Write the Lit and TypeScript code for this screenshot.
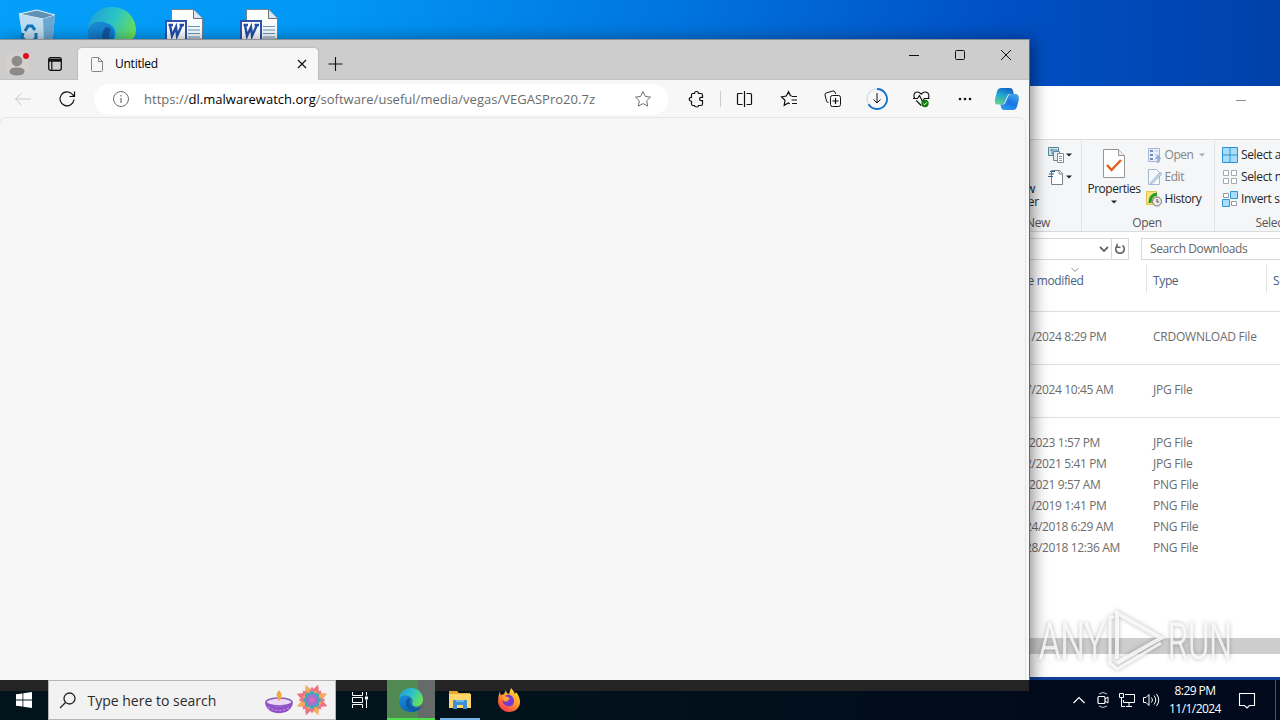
import { LitElement, html, css, svg } from 'lit';
import { customElement } from 'lit/decorators.js';

const files = [
  { group: true, date: '11/1/2024 8:29 PM', type: 'CRDOWNLOAD File' },
  { group: true, date: '10/7/2024 10:45 AM', type: 'JPG File' },
  { group: true, date: '8/9/2023 1:57 PM', type: 'JPG File' },
  { date: '9/22/2021 5:41 PM', type: 'JPG File' },
  { date: '6/7/2021 9:57 AM', type: 'PNG File' },
  { date: '3/11/2019 1:41 PM', type: 'PNG File' },
  { date: '10/24/2018 6:29 AM', type: 'PNG File' },
  { date: '12/28/2018 12:36 AM', type: 'PNG File' },
];

const edgeLogo = (id: string) => svg`
  <defs>
    <linearGradient id="${id}a" x1="0" y1="0.2" x2="1" y2="0.6">
      <stop offset="0" stop-color="#229fd8" />
      <stop offset="0.5" stop-color="#2bc3c8" />
      <stop offset="1" stop-color="#6be256" />
    </linearGradient>
    <linearGradient id="${id}b" x1="0" y1="0" x2="0.5" y2="1">
      <stop offset="0" stop-color="#1a8fdc" />
      <stop offset="1" stop-color="#0c62b8" />
    </linearGradient>
  </defs>
  <path fill="url(#${id}a)" d="M0 22C1 8 12 0 24 0c15 0 24 11 24 23 0 9-7 14-15 14-5 0-8-2-7-5 3-4 2-12-5-15C13 13 4 16 0 22z" />
  <path fill="url(#${id}b)" d="M0 23C2 16 10 13 18 16c6 2 9 7 8 12-1 6 4 11 13 11 3 0 5-1 7-2-5 8-14 12-23 11C9 47-1 37 0 23z" />
  <path fill="#1257a0" d="M18 20c-6 6-5 17 3 23 6 5 18 3 24-5-12 5-23 1-24-9-.1-3 1-5 2-6-1-2-3-3-5-3z" />
`;

const wordIcon = html`
  <svg width="40" height="30" viewBox="0 0 40 30">
    <path d="M6.500 30V.5h22l9 9V30z" fill="#fdfefe" stroke="#69717a" stroke-width=".8" />
    <path d="M28.500.5v9h9" fill="#dfe5ec" stroke="#69717a" />
    <path d="M23 17.500h12M23 21h12M23 24.500h12M23 28h12" stroke="#6299c9" />
    <rect x="1" y="12" width="20" height="20" fill="#fff" stroke="#2a55ab" stroke-width="2" />
    <path d="M5 16l2 11 4-9 1 9 5-11M3.500 16H8M14.500 16H19" fill="none" stroke="#2450a8" stroke-width="2.400" />
  </svg>
`;

/**
 * Icons on the desktop background
 */
@customElement('desktop-icons')
export class DesktopIcons extends LitElement {
  static styles = css`
    :host {
      display: flex;
      padding: 7px 0 0 17px;
      height: 34px;
      overflow: hidden;
    }
    .item {
      width: 71px;
      height: 34px;
    }
    .item + .item {
      width: 77px;
    }
    .item + .item + .item {
      width: 75px;
      padding-top: 2px;
    }
  `;

  render() {
    return html`
      <div class="item">
        <svg width="40" height="40" viewBox="0 0 40 40">
          <path d="M2 7l18-4 18 5-3 32H7z" fill="#9fd0ef" />
          <path d="M2 7l18-4 18 5-12 4z" fill="#5e91b5" stroke="#e5f4fc" />
          <path d="M26 12l12-4-3 32h-8z" fill="#6ba9d3" />
          <path d="M2 7l24 5 1 28H7z" fill="#bfdef1" />
          <path d="M8 24l3-5 4 0 3 4M19 26l0 5-3 3h-3M6 26l-1 4 4 5" fill="none" stroke="#1277bd" stroke-width="3" />
        </svg>
      </div>
      <div class="item">
        <svg width="48" height="48" viewBox="0 0 48 48">${edgeLogo('d')}</svg>
      </div>
      <div class="item">${wordIcon}</div>
      <div class="item">${wordIcon}</div>
    `;
  }
}

/**
 * Edge window with a single tab
 */
@customElement('browser-window')
export class BrowserWindow extends LitElement {
  static styles = css`
    :host {
      display: flex;
      flex-direction: column;
      background: #f7f7f7;
      color: #000;
      font-family: 'Open Sans', 'Noto Sans', sans-serif;
      box-sizing: border-box;
      border-right: 1px solid #66696c;
      border-top: 1px solid #8a9297;
      box-shadow: 2px 2px 16px rgba(0, 0, 0, 0.5);
    }
    svg {
      display: block;
      flex: none;
      fill: none;
      stroke: #111;
      overflow: visible;
    }
    .titlebar {
      display: flex;
      height: 40px;
      background: #cdcdcd;
      border-bottom: 1px solid #c2c2c2;
      box-sizing: border-box;
    }
    .profile {
      padding: 11px 0 0 5px;
      width: 42px;
      box-sizing: border-box;
    }
    .workspaces {
      padding-top: 17px;
      width: 30px;
      padding-left: 6px;
      box-sizing: border-box;
    }
    .tab {
      margin: 8px 0 -1px 6px;
      width: 240px;
      box-sizing: border-box;
      padding: 0 11px 0 13px;
      display: flex;
      align-items: center;
      background: #f7f7f7;
      border-radius: 4px 4px 0 0;
      box-shadow: 0 0 2px #999;
      clip-path: inset(-2px -2px 0 -2px);
    }
    .tab span {
      flex: 1;
      padding: 0 0 1px 12px;
      font-size: 12px;
      letter-spacing: -0.250px;
    }
    .new-tab {
      padding: 17px 0 0 10px;
      flex: 1;
    }
    .controls {
      display: flex;
      gap: 36px;
      padding: 10px 18px 0 0;
    }
    .toolbar {
      display: flex;
      align-items: center;
      height: 37px;
      padding-top: 1px;
      box-sizing: border-box;
      background: #f7f7f7;
    }
    .back {
      margin-left: 14px;
    }
    .reload {
      margin: 0 18px 0 27px;
    }
    .omnibox {
      display: flex;
      align-items: center;
      width: 574px;
      height: 31px;
      padding: 0 16px 0 18px;
      box-sizing: border-box;
      border-radius: 16px;
      background: #fff;
    }
    .url {
      flex: 1;
      padding-left: 14px;
      font-size: 13px;
      letter-spacing: 0.020px;
      color: #6b6b6b;
      white-space: nowrap;
    }
    .url b {
      font-weight: 400;
      color: #000;
    }
    .actions {
      flex: 1;
      display: flex;
      align-items: center;
      padding-left: 20px;
    }
    .divider {
      width: 1px;
      height: 16px;
      margin: 0 15px 0 14px;
      background: #ccc;
    }
    .spaced {
      display: flex;
      align-items: center;
      gap: 24px;
    }
    .copilot {
      margin-left: 18px;
    }
    .page {
      flex: 1;
      margin: 0 3px 0 -1px;
      border: 1px solid #e6e6e6;
      border-width: 1px 1px 0;
      border-radius: 7px 7px 0 0;
      background: #f6f6f6;
    }
  `;

  render() {
    return html`
      <div class="titlebar">
        <div class="profile">
          <svg width="26" height="26" viewBox="0 0 26 26">
            <circle cx="12" cy="13" r="12.500" fill="#d3d0cd" stroke="none" />
            <circle cx="12" cy="10" r="5.300" fill="#8d8b89" stroke="none" />
            <path d="M4.500 20.500c0-3 3-4 7.500-4s7.500 1 7.500 4-4 4-7.500 4-7.500-1-7.500-4z" fill="#8d8b89" stroke="none" />
            <circle cx="21" cy="5" r="3" fill="#e30b1c" stroke="none" />
          </svg>
        </div>
        <div class="workspaces">
          <svg width="14" height="14" viewBox="0 0 14 14">
            <rect x=".7" y=".7" width="12.600" height="12.600" rx="2" stroke-width="1.300" />
            <path d="M1 2.500h12M1 4h12" stroke-width="1.300" />
            <path d="M3.800 4v9" stroke-width="1.200" />
          </svg>
        </div>
        <div class="tab">
          <svg width="12" height="15" viewBox="0 0 12 15">
            <path d="M.5 1.500q0-1 1-1h6l4 4v9q0 1-1 1h-9q-1 0-1-1zM7.500.5v4h4" stroke="#858585" />
          </svg>
          <span>Untitled</span>
          <svg width="10" height="10" viewBox="0 0 10 10">
            <path d="M1 1l8 8M9 1l-8 8" stroke-width="1.200" />
          </svg>
        </div>
        <div class="new-tab">
          <svg width="14" height="14" viewBox="0 0 14 14">
            <path d="M7.500 0v14M.5 7h14" stroke-width="1.100" />
          </svg>
        </div>
        <div class="controls">
          <svg width="10" height="10" viewBox="0 0 10 10"><path d="M0 5.500h10" /></svg>
          <svg width="10" height="10" viewBox="0 0 10 10">
            <rect x=".5" y=".5" width="9" height="9" rx="1" />
          </svg>
          <svg width="10" height="10" viewBox="0 0 10 10"><path d="M0 0l10 10M10 0L0 10" /></svg>
        </div>
      </div>
      <div class="toolbar">
        <svg class="back" width="18" height="14" viewBox="0 0 18 14">
          <path d="M17 7H1.500M7.500 1l-6 6 6 6" stroke="#c9c9c9" />
        </svg>
        <svg class="reload" width="17" height="16" viewBox="0 0 17 16">
          <path d="M15 8.500A7 7 0 1 1 13.500 3.500L15.500 5.500M15.500.5v5h-5" stroke-width="1.200" />
        </svg>
        <div class="omnibox">
          <svg width="18" height="18" viewBox="0 0 18 18">
            <circle cx="9" cy="9" r="7.500" stroke="#6d6d6d" />
            <path d="M9 8v5M9 5v1.500" stroke="#6d6d6d" stroke-width="1.200" />
          </svg>
          <div class="url">https://<b>dl.malwarewatch.org</b>/software/useful/media/vegas/VEGASPro20.7z</div>
          <svg width="18" height="18" viewBox="0 0 18 18">
            <path d="M9 1.500l2.300 4.900 5.200.7-3.800 3.700 1 5.300L9 13.600l-4.700 2.500 1-5.300L1.500 7.100l5.200-.7z" stroke="#707070" />
          </svg>
        </div>
        <div class="actions">
          <svg width="18" height="18" viewBox="0 0 18 18">
            <path d="M4.500 3.500h2C6.500.8 10.500.8 10.500 3.500h2.500q1.500 0 1.500 1.500v2.300h-1.200c-2.300 0-2.300 3.400 0 3.400h1.200V14q0 1.500-1.500 1.500h-2.500c0 2-4 2-4 0H5q-1.500 0-1.500-1.500v-2.700c-3 0-3-4 0-4V4.500q0-1 1-1z" stroke-width="1.200" />
          </svg>
          <div class="divider"></div>
          <div class="spaced">
            <svg width="18" height="18" viewBox="0 0 18 18">
              <path d="M6.500 3.500H2.500q-1 0-1 1v9q0 1 1 1h4M10.500 3.500h4q1 0 1 1v9q0 1-1 1h-4M8.500 1v16" stroke-width="1.200" />
            </svg>
            <svg width="20" height="18" viewBox="0 0 20 18">
              <path d="M14 6l-1.500-.2L10.500 1.700 8.300 6 3.500 6.800l3.500 3.500-.8 5L10.300 13l1.500.8M14 6.500h5M13.500 10h5.500M14 13.500h5" stroke-width="1.200" />
            </svg>
            <svg width="20" height="18" viewBox="0 0 20 18">
              <path d="M6.500 12.500q-1.500 0-2-1.500L3 5q-.3-1.500 1-2L11 1q1.500-.3 2 1l.6 2" />
              <rect x="8.500" y="5.500" width="10" height="11" rx="2" />
              <path d="M13.500 8v6M10.500 11h6" stroke-width="1.200" />
            </svg>
            <svg width="22" height="22" viewBox="0 0 22 22">
              <circle cx="11" cy="11" r="10" stroke="#dce5ee" stroke-width="1.600" />
              <path d="M11 1a10 10 0 1 1-8.500 15.300" stroke="#1673c9" stroke-width="1.800" />
              <path d="M11 5v10M7.500 11.500L11 15l3.500-3.500" />
            </svg>
            <svg width="20" height="18" viewBox="0 0 20 18">
              <path d="M3 8.500C1 6 1.800 2 5.200 2 7.200 2 8.200 3 9.200 4.200 10.200 3 11.200 2 13.200 2c3.700 0 4.700 4 2.700 6.800M4.200 10.500l5 5M1 8.500H5.500l2-3 3 6L12.200 8.500H17.500" stroke-width="1.100" />
              <circle cx="13" cy="13.500" r="3.700" fill="#107c10" stroke="none" />
              <path d="M11.300 13.500l1.300 1.300 2.300-2.500" stroke="#fff" />
            </svg>
            <svg width="20" height="18" viewBox="0 0 20 18">
              <g fill="#111" stroke="none">
                <circle cx="4" cy="9" r="1.300" />
                <circle cx="9" cy="9" r="1.300" />
                <circle cx="14" cy="9" r="1.300" />
              </g>
            </svg>
          </div>
          <svg class="copilot" width="26" height="24" viewBox="0 0 26 24">
            <defs>
              <linearGradient id="ca" x1="0.6" y1="0" x2="0.2" y2="1">
                <stop offset="0" stop-color="#1267c7" />
                <stop offset=".45" stop-color="#23a6d0" />
                <stop offset="1" stop-color="#69d389" />
              </linearGradient>
              <linearGradient id="cb" x1="0.7" y1="0" x2="0.2" y2="1">
                <stop offset="0" stop-color="#42a4e8" />
                <stop offset=".5" stop-color="#1b74e2" />
                <stop offset="1" stop-color="#2b9cf2" />
              </linearGradient>
            </defs>
            <path d="M7 1h9q2.500 0 3 3l.8 3h-4q-2 0-2.800 2.500L11 15q-.8 2.500-3 2.500H3.500C.5 17.500.5 14 1.500 10L3 4.500Q4 1 7 1z" fill="url(#ca)" stroke="none" />
            <path d="M19 23h-9q-2.500 0-3-3l-.6-2.500H9q2 0 2.800-2.500L14 9.500Q14.800 7 17 7h4.500c3 0 4 3.500 3 7L23 19.500q-1 3.500-4 3.500z" fill="url(#cb)" stroke="none" />
          </svg>
        </div>
      </div>
      <div class="page"></div>
    `;
  }
}

/**
 * File explorer showing the Downloads folder
 */
@customElement('explorer-window')
export class ExplorerWindow extends LitElement {
  static styles = css`
    :host {
      display: flex;
      flex-direction: column;
      box-sizing: border-box;
      background: #fff;
      color: #262626;
      font: 12px/16px 'Open Sans', 'Noto Sans', sans-serif;
      letter-spacing: -0.250px;
      white-space: nowrap;
      overflow: hidden;
    }
    svg {
      display: block;
      flex: none;
      fill: none;
    }
    .title {
      height: 53px;
      padding: 14px 0 0 236px;
      box-sizing: border-box;
    }
    .ribbon {
      display: flex;
      height: 93px;
      box-sizing: border-box;
      background: #f5f6f7;
      border: 1px solid #dadbdc;
      border-width: 1px 0;
    }
    .group {
      display: flex;
      flex: none;
      flex-direction: column;
      box-sizing: border-box;
      margin: 1px 0 0;
      border-right: 1px solid #e0e2e4;
    }
    .tools {
      display: flex;
      height: 70px;
    }
    .caption {
      text-align: center;
      color: #555;
      padding: 4px 2px 0 0;
      letter-spacing: -0.350px;
    }
    .new {
      width: 82px;
    }
    .new .caption {
      text-align: left;
      text-indent: 26px;
    }
    .new-folder {
      width: 42px;
      padding: 41px 2px 0 6px;
      box-sizing: border-box;
      text-align: center;
      line-height: 13px;
      background: linear-gradient(#f3cf61, #f3cf61) 29px 20px / 1px 12px no-repeat;
    }
    .stack {
      display: flex;
      flex-direction: column;
      padding-top: 3px;
    }
    .tool {
      display: flex;
      align-items: center;
      height: 22px;
      gap: 2px;
    }
    .new .stack {
      padding-left: 6px;
    }
    .open {
      width: 133px;
    }
    .open .tool {
      gap: 2.500px;
      letter-spacing: -0.450px;
    }
    .properties {
      width: 64px;
      display: flex;
      flex-direction: column;
      align-items: center;
      padding-top: 8px;
      box-sizing: border-box;
    }
    .properties span {
      padding: 3px 0 3px;
      letter-spacing: -0.500px;
    }
    .disabled {
      color: #858585;
    }
    .select {
      width: 120px;
      padding-left: 7px;
    }
    .select .caption {
      padding-right: 14px;
    }
    .select .tool {
      gap: 3px;
      letter-spacing: -0.350px;
    }
    .address {
      display: flex;
      padding-top: 6px;
      color: #666;
    }
    .path {
      display: flex;
      flex: none;
      align-items: center;
      justify-content: flex-end;
      width: 129px;
      height: 22px;
      box-sizing: border-box;
      border: 1px solid #d9d9d9;
      gap: 2px;
    }
    .refresh {
      border-left: 1px solid #d9d9d9;
      padding: 4px 2px;
    }
    .search {
      box-sizing: border-box;
      flex: 1;
      height: 22px;
      margin-left: 12px;
      padding: 2px 8px;
      border: 1px solid #d9d9d9;
      letter-spacing: -0.400px;
    }
    .row {
      display: grid;
      grid-template-columns: 139px 120px 80px;
      padding-left: 8px;
      height: 21px;
      align-items: center;
      color: #6d6d6d;
      letter-spacing: -0.370px;
    }
    .heading {
      height: 28px;
      margin-top: 5px;
      color: #4a6080;
    }
    .heading span {
      border-right: 1px solid #e3e3e3;
      height: 28px;
      box-sizing: border-box;
      padding-top: 2px;
      line-height: 28px;
    }
    .heading span:first-child {
      padding-left: 1px;
    }
    .heading span + span {
      padding-left: 6px;
    }
    .sort {
      height: 4px;
      margin: -25px 0 22px 71px;
    }
    .list {
      flex: 1;
    }
    .row .type {
      padding-left: 6px;
      letter-spacing: -0.230px;
    }
    .group-line {
      height: 14px;
      margin-top: 17px;
      border-top: 1px solid #dedede;
    }
    .scrollbar {
      height: 16px;
      margin-bottom: 23px;
      background: #cdcdcd;
    }
  `;

  _arrow(color = '#222') {
    return html`<svg width="6" height="4" viewBox="0 0 6 4"><path d="M0 .5h6l-3 3z" fill=${color} /></svg>`;
  }

  render() {
    return html`
      <div class="title">
        <svg width="10" height="2"><path d="M0 .5h10" stroke="#8e8e8e" /></svg>
      </div>
      <div class="ribbon">
        <div class="group new">
          <div class="tools">
            <div class="new-folder">New<br />folder</div>
            <div class="stack">
              <div class="tool">
                <svg width="16" height="16" viewBox="0 0 16 16">
                  <path d="M.5.500h10v8H.5z" fill="#d5e4ec" stroke="#52859b" />
                  <path d="M2 3h7v4H4V2" stroke="#52859b" />
                  <path d="M5.500 4.500h6v9h-6z" fill="#e7eef3" stroke="#67869c" />
                  <path d="M9.500 6.500h6v9h-6z" fill="#fff" stroke="#888" />
                  <path d="M11 9.500h3M11 11.500h3M11 13.500h3" stroke="#8b9fab" />
                </svg>
                ${this._arrow()}
              </div>
              <div class="tool">
                <svg width="16" height="16" viewBox="0 0 16 16">
                  <path d="M3.500 1.500h8l3 3v11h-11z" fill="#fff" stroke="#7b8389" />
                  <path d="M11 1v4h4" stroke="#7b8389" />
                  <path d="M2 2.500h5M1 5h5M0 7.500h5" stroke="#28639c" />
                </svg>
                ${this._arrow()}
              </div>
            </div>
          </div>
          <div class="caption">New</div>
        </div>
        <div class="group open">
          <div class="tools">
            <div class="properties">
              <svg width="22" height="29" viewBox="0 0 22 29">
                <path d="M.5.500h15l6 6v22H.5z" fill="#fff" stroke="#969696" />
                <path d="M15.500.5v6h6" fill="#eee" stroke="#969696" />
                <path d="M4 16l4.500 5L18 11" stroke="#e2601e" stroke-width="2.500" />
              </svg>
              <span>Properties</span>
              ${this._arrow()}
            </div>
            <div class="stack">
              <div class="tool disabled">
                <svg width="16" height="16" viewBox="0 0 16 16">
                  <path d="M2.500 1.500h11v13h-11z" fill="#eaf0fb" stroke="#a8b5ce" />
                  <path d="M4 4h3M4 8h3M4 12h3" stroke="#6c88bf" stroke-width="2" />
                  <path d="M9 4h3M9 8h3" stroke="#b5c1d6" />
                  <path d="M12 16V9M9.500 12L12 9l2.500 3" stroke="#8faad5" stroke-width="1.500" />
                </svg>
                <span>Open&nbsp;</span>${this._arrow('#aaa')}
              </div>
              <div class="tool disabled">
                <svg width="16" height="16" viewBox="0 0 16 16">
                  <path d="M2.500.5h8l3 3v12h-11z" fill="#f6f9fc" stroke="#aab9ca" />
                  <path d="M5 13L14 3l2 2-9 9-3 1z" fill="#bdd3ea" stroke="#9eb8d4" stroke-width=".7" />
                </svg>
                Edit
              </div>
              <div class="tool">
                <svg width="16" height="16" viewBox="0 0 16 16">
                  <path d="M.5.500h10v13H.5z" fill="#fae37c" stroke="#e2c352" />
                  <circle cx="11" cy="10.500" r="4.500" fill="#e8e8e8" stroke="#777" />
                  <path d="M11 8v3h2" stroke="#555" />
                  <path d="M11 3Q4 4 4 12" stroke="#239b2d" stroke-width="3" />
                </svg>
                History
              </div>
            </div>
          </div>
          <div class="caption">Open</div>
        </div>
        <div class="group select">
          <div class="tools">
            <div class="stack">
              <div class="tool">
                <svg width="16" height="16" viewBox="0 0 16 16">
                  <path d="M.5.500h15v15H.5zM8 0v16M0 8h16" fill="#a9defb" stroke="#2991d3" />
                </svg>
                Select all
              </div>
              <div class="tool">
                <svg width="16" height="16" viewBox="0 0 16 16">
                  <path d="M1.500 1.500h5v5h-5zM9.500 1.500h5v5h-5zM1.500 9.500h5v5h-5zM9.500 9.500h5v5h-5z" fill="#fff" stroke="#a3abb0" />
                </svg>
                Select none
              </div>
              <div class="tool">
                <svg width="16" height="16" viewBox="0 0 16 16">
                  <path d="M1.500 2.500h5v4h-5zM9.500 10.500h5v4h-5z" fill="#fff" stroke="#929ca3" />
                  <path d="M8.500.500h7v7h-7zM.5 8.500h7v7h-7z" fill="#a9defb" stroke="#3595d4" />
                </svg>
                Invert selection
              </div>
            </div>
          </div>
          <div class="caption">Select</div>
        </div>
      </div>
      <div class="address">
        <div class="path">
          <svg width="10" height="6" viewBox="0 0 10 6"><path d="M1 1l4 4 4-4" stroke="#666" stroke-width="1.800" /></svg>
          <div class="refresh">
            <svg width="12" height="12" viewBox="0 0 12 12">
              <path d="M8.500 2.500a4.300 4.300 0 1 1-5 0M3 .8v3.400h3.500" stroke="#666" stroke-width="1.600" />
            </svg>
          </div>
        </div>
        <div class="search">Search Downloads</div>
      </div>
      <div class="row heading">
        <span>Date modified</span><span>Type</span><span>Size</span>
      </div>
      <svg class="sort" width="8" height="4" viewBox="0 0 8 4"><path d="M.5 0L4 3.500 7.500 0" stroke="#8e8e8e" /></svg>
      <div class="list">
        ${files.map(
          f => html`
            ${f.group ? html`<div class="group-line"></div>` : ''}
            <div class="row">
              <span>${f.date}</span><span class="type">${f.type}</span>
            </div>
          `
        )}
      </div>
      <div class="scrollbar"></div>
    `;
  }
}

@customElement('task-bar')
export class TaskBar extends LitElement {
  static styles = css`
    :host {
      display: flex;
      background: linear-gradient(90deg, #02131b 0, #02131b 500px, #010b1c 1030px, #010a1c 100%);
      color: #fff;
      font-family: 'Open Sans', 'Noto Sans', sans-serif;
    }
    svg {
      display: block;
      flex: none;
      fill: none;
    }
    .under {
      position: absolute;
      left: 0;
      top: 0;
      width: 1029px;
      height: 11px;
      background: #242424;
    }
    .items {
      position: relative;
      display: flex;
      flex: 1;
    }
    .button {
      display: flex;
      align-items: center;
      justify-content: center;
      width: 48px;
      box-sizing: border-box;
    }
    .search {
      display: flex;
      align-items: center;
      width: 288px;
      box-sizing: border-box;
      padding: 0 8px 0 10px;
      border: 1px solid #b5b5b5;
      background: #f2f2f2;
      color: #2b2b2b;
      font-size: 14px;
    }
    .search span {
      flex: 1;
      padding-left: 11.500px;
      letter-spacing: 0;
    }
    .edge {
      margin-left: 3px;
      background: linear-gradient(90deg, #508951 31px, #646b69 31px);
      border-bottom: 2px solid #4be04a;
      padding-top: 2px;
    }
    .folder {
      width: 40px;
      margin: 0 5px;
      border-bottom: 2px solid #76b2e8;
      padding-top: 2px;
    }
    .tray {
      display: flex;
      align-items: center;
      gap: 6px;
    }
    .clock {
      width: 59px;
      padding-right: 1px;
      box-sizing: border-box;
      text-align: center;
      font-size: 12px;
      line-height: 18px;
      letter-spacing: -0.550px;
    }
    .notify {
      margin: 0 13px 0 7px;
    }
    .peek {
      width: 4px;
      align-self: stretch;
      border-left: 1px solid #4b5362;
    }
  `;

  render() {
    return html`
      <div class="under"></div>
      <div class="items">
        <div class="button">
          <svg width="16" height="16" viewBox="0 0 16 16">
            <path d="M0 2.300L6.500 1.400v6.200H0zM7.300 1.300L16 0v7.600H7.300zM0 8.400h6.500v6.200L0 13.700zM7.300 8.400H16V16l-8.700-1.300z" fill="#fff" />
          </svg>
        </div>
        <div class="search">
          <svg width="17" height="17" viewBox="0 0 17 17">
            <circle cx="10.500" cy="6.500" r="5.500" stroke="#222" stroke-width="1.300" />
            <path d="M6.500 10.500L1 16" stroke="#222" stroke-width="1.300" />
          </svg>
          <span>Type here to search</span>
          <svg width="62" height="32" viewBox="0 0 62 32">
            <path d="M14 6q-5 6 0 9 5-3 0-9z" fill="#eea638" />
            <ellipse cx="14" cy="18" rx="13" ry="4" fill="#ead9f7" stroke="#8959bd" stroke-width="1.500" />
            <path d="M14 9q-4 5 0 8 4-3 0-8z" fill="#f0a848" />
            <path d="M0 18c1 15 27 15 28 0-5 6-23 6-28 0z" fill="#9150c6" />
            <path d="M3 23q11 7 22 0" stroke="#dcaaf3" stroke-dasharray="2 2" />
            ${[0, 45, 90, 135, 180, 225, 270, 315].map(
              a => svg`
                <path d="M42.500 8l4.500-8.500L51.500 8z" fill=${a % 90 ? '#f5ad5c' : '#ee7380'} transform="rotate(${a + 22} 47 16)" />
              `
            )}
            ${[0, 45, 90, 135, 180, 225, 270, 315].map(
              a => svg`<path d="M44 8l3-5.500L50 8z" fill="#e9708d" transform="rotate(${a} 47 16)" />`
            )}
            <circle cx="47" cy="16" r="9.500" fill="#f2a15c" />
            ${[0, 45, 90, 135, 180, 225, 270, 315].map(
              a => svg`<ellipse cx="47" cy="11" rx="2.800" ry="4" fill="#3fa9b8" transform="rotate(${a} 47 16)" />`
            )}
            <circle cx="47" cy="16" r="6" fill="#9a75cf" />
            <circle cx="47" cy="16" r="3" fill="#d66cc3" />
          </svg>
        </div>
        <div class="button">
          <svg width="17" height="16" viewBox="0 0 17 16">
            <path d="M.5 0v3.500h10V0M.5 16v-3.500h10V16M.5 5.500h10v5H.5zM14.500 0v3.500M14.500 8v8" stroke="#fff" />
            <path d="M13 4.500h3v3h-3z" fill="#fff" />
          </svg>
        </div>
        <div class="button edge">
          <svg width="24" height="24" viewBox="0 0 48 48">${edgeLogo('t')}</svg>
        </div>
        <div class="button folder">
          <svg width="22" height="20" viewBox="0 0 22 20">
            <path d="M0 1h8l2 2h11v5H0z" fill="#e7a934" />
            <path d="M0 4h22v14H0z" fill="#ffd66d" />
            <path d="M4 19v-8q0-1 1-1h12q1 0 1 1v8h-4v-4H8v4z" fill="#3d91d2" />
            <path d="M7 10h8v2H7z" fill="#70bbea" />
          </svg>
        </div>
        <div class="button">
          <svg width="24" height="26" viewBox="0 0 24 26">
            <defs>
              <linearGradient id="fx" x1="0.8" y1="0" x2="0.2" y2="1">
                <stop offset="0" stop-color="#ffe13b" />
                <stop offset="0.5" stop-color="#ff942d" />
                <stop offset="1" stop-color="#f52d50" />
              </linearGradient>
            </defs>
            <path d="M3 4q0 3 1 4l3-1 2-4q0 3 3 4l2-6q3 3 4 6l1-2q4 5 4 10c0 6-5 10-11 10S1 20 1 14q0-5 2-10z" fill="url(#fx)" />
            <path d="M8 9c4-3 9 0 9 5s-5 7-9 4q-3-2-2-5l2 2 4-1q-3-1-4-5z" fill="#733ccf" />
            <path d="M7 9l4 1 2 2-4 2-3-1z" fill="#ffa436" />
          </svg>
        </div>
      </div>
      <div class="tray">
        <svg width="18" height="18" viewBox="0 0 18 18"><path d="M3.500 12L9 6.500l5.500 5.500" stroke="#fff" stroke-width="1.200" /></svg>
        <svg width="18" height="18" viewBox="0 0 18 18">
          <path d="M5 3q4-3 8 0M5 15q4 3 8 0" stroke="#bfc8d2" />
          <rect x="4" y="5.500" width="7" height="7" rx="1" stroke="#fff" stroke-width="1.200" />
          <path d="M11 8l3-2v6l-3-2" stroke="#fff" />
        </svg>
        <svg width="18" height="18" viewBox="0 0 18 18">
          <path d="M7 3.500h9.500v8H5.500V9M11 12v3.500M8 15.500h6M1.500 2.500h4v4h-4zM3.500 7v8.500H7" stroke="#fff" />
        </svg>
        <svg width="18" height="18" viewBox="0 0 18 18">
          <path d="M1.500 6.500H4l3-3v11l-3-3H1.500zM9.500 6.500q2 2.500 0 5M12 4.500q3.500 4.500 0 9M14.500 3q4.500 6 0 12" stroke="#fff" />
        </svg>
        <div class="clock">8:29 PM<br />11/1/2024</div>
        <svg class="notify" width="18" height="18" viewBox="0 0 18 18">
          <path d="M1.500 2.500h15v12h-5L9 17l-2.500-2.500h-5z" stroke="#fff" stroke-width="1.100" />
        </svg>
        <div class="peek"></div>
      </div>
    `;
  }
}

@customElement('app-root')
export class AppRoot extends LitElement {
  static styles = css`
    :host {
      display: block;
      position: relative;
      width: 1280px;
      height: 720px;
      overflow: hidden;
      background: linear-gradient(90deg, #049ff9 0, #0298f5 320px, #0074df 680px, #0050c4 1000px, #0041aa 1280px);
    }
    explorer-window {
      position: absolute;
      left: 1000px;
      top: 86px;
      width: 300px;
      height: 591px;
    }
    .strip {
      position: absolute;
      left: 1000px;
      top: 677px;
      width: 280px;
      height: 3px;
      background: #103f98;
    }
    browser-window {
      position: absolute;
      left: 0;
      top: 39px;
      width: 1030px;
      height: 652px;
    }
    task-bar {
      position: absolute;
      left: 0;
      top: 680px;
      width: 1280px;
      height: 40px;
    }
    .watermark {
      position: absolute;
      left: 1035px;
      top: 604px;
      filter: drop-shadow(0 0 2px rgba(0, 0, 0, 0.35));
      font: 300 50px Roboto, sans-serif;
    }
  `;

  render() {
    return html`
      <desktop-icons></desktop-icons>
      <explorer-window></explorer-window>
      <div class="strip"></div>
      <browser-window></browser-window>
      <task-bar></task-bar>
      <svg class="watermark" width="204" height="72" viewBox="0 0 204 72">
        <g fill="#fff" fill-opacity="0.75" stroke="#fff" stroke-opacity="0.6" stroke-width="1.200">
          <text x="4" y="55" textLength="66" lengthAdjust="spacingAndGlyphs">ANY</text>
          <text x="133" y="55" textLength="64" lengthAdjust="spacingAndGlyphs">RUN</text>
        </g>
        <g fill="none" stroke="#fff" stroke-opacity="0.8">
          <path d="M82 55V9l44 25-44 25" stroke-width="4" />
          <path d="M79 13h-4v46l7 6 44-26" stroke-width="3" />
        </g>
      </svg>
    `;
  }
}
